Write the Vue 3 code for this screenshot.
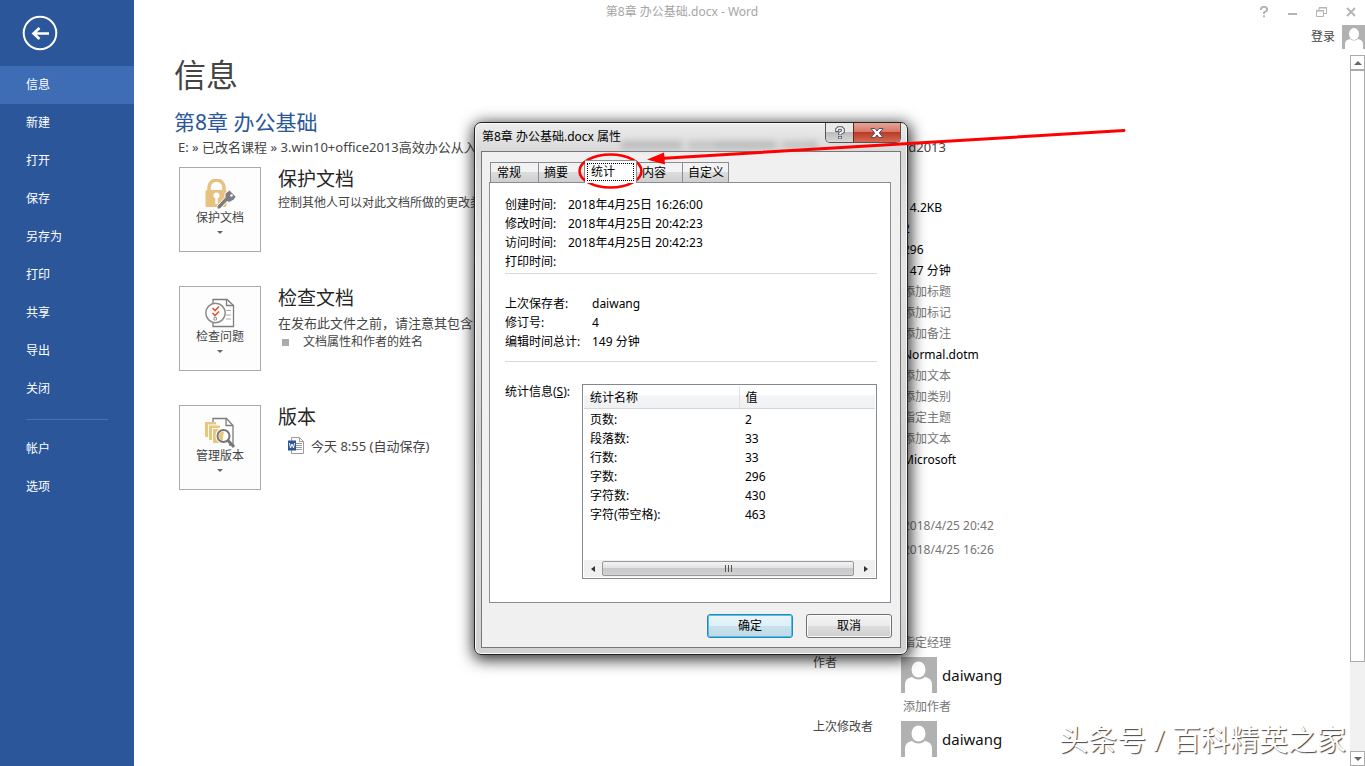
<template>
  <div class="word-app">
    <nav class="side-nav">
      <button class="back-btn" aria-label="返回">
        <svg width="36" height="36" viewBox="0 0 36 36" fill="none" stroke="#fff">
          <circle cx="18" cy="18" r="16.3" stroke-width="2" />
          <path d="M27 18.500H11M17.500 13l-6 5.500 6 5.500" stroke-width="2.6" />
        </svg>
      </button>
      <a
        v-for="item in navItems"
        :key="item"
        href="#"
        class="nav-item"
        :class="{ active: item === activeNav }"
        @click.prevent="activeNav = item"
      >{{ item }}</a>
      <div class="nav-line"></div>
      <a
        v-for="item in navBottom"
        :key="item"
        href="#"
        class="nav-item"
        :class="{ active: item === activeNav }"
        @click.prevent="activeNav = item"
      >{{ item }}</a>
    </nav>

    <div class="main">
      <header class="title-bar">
        <span class="title-text">第8章 办公基础.docx - Word</span>
        <div class="window-tools">
          <button aria-label="帮助">
            <svg width="12" height="12" viewBox="0 0 12 12" fill="none" stroke="#b5b5b5" stroke-width="2">
              <path d="M3 4V2.500L4.500 1h3L9 2.500v2L6 6.500V8M6 9.300v2" />
            </svg>
          </button>
          <button aria-label="最小化">
            <svg width="12" height="12" viewBox="0 0 12 12" stroke="#b5b5b5" stroke-width="2">
              <path d="M1 8h9" />
            </svg>
          </button>
          <button aria-label="还原">
            <svg width="12" height="12" viewBox="0 0 12 12" fill="none" stroke="#b5b5b5">
              <path d="M3 4V1.500h7.500v6H8M3 2h8M0 5h8" />
              <path d="M.5 4.500h7v6h-7z" />
            </svg>
          </button>
          <button aria-label="关闭">
            <svg width="12" height="12" viewBox="0 0 12 12" stroke="#b5b5b5" stroke-width="2">
              <path d="M2 2l8 8M10 2l-8 8" />
            </svg>
          </button>
        </div>
      </header>
      <div class="account">
        <a href="#" class="login">登录</a>
        <svg class="account-avatar" width="23" height="24" viewBox="0 0 23 24">
          <path d="M0 0h23v24H0z" fill="#b1b1b1" />
          <ellipse cx="12" cy="9" rx="5" ry="6" fill="#fff" />
          <path d="M3 24v-5q0-4 5-5 4 3 8 0 5 1 5 5v5z" fill="#fff" />
        </svg>
      </div>

      <div class="body">
        <div class="content">
          <h1>信息</h1>
          <h2>第8章 办公基础</h2>
          <div class="path">
            <span>E: » 已改名课程 » 3.win10+office2013高效办公从入</span>
            <span>word2013</span>
          </div>
          <div class="columns">
            <div class="sections">
              <section class="section">
                <button class="card">
                  <svg width="32" height="32" viewBox="0 0 32 32">
                    <path d="M5 12V8.500a7.500 7.500 0 0 1 15 0V12" fill="none" stroke="#e8c181" stroke-width="3.500" />
                    <rect x="1.500" y="11" width="21" height="17" rx="1.500" fill="#e8c181" />
                    <circle cx="12.500" cy="16.500" r="3" fill="#fff" />
                    <path d="M11.300 18h2.500v7h-2.500z" fill="#fff" />
                    <path d="M21 14.500l4.500-3.500 6.500 6.500-2 3.500-5 2.500-2-1-7 7.500h-3v-3l8-8.500z" fill="#7d7d7d" stroke="#fff" />
                    <circle cx="27.500" cy="16.500" r="1.300" fill="#fff" />
                  </svg>
                  <span class="card-text">保护文档</span>
                  <span class="card-arrow"></span>
                </button>
                <div class="section-info">
                  <h3>保护文档</h3>
                  <p class="small">控制其他人可以对此文档所做的更改类</p>
                </div>
              </section>

              <section class="section">
                <button class="card">
                  <svg width="32" height="32" viewBox="0 0 32 32" fill="none" stroke="#7d7d7d">
                    <path d="M9 1.500h14l6.500 6v21H9z" fill="#fff" stroke-width="1.300" />
                    <path d="M22.500 1.500v6h7" stroke-width="1.300" />
                    <path d="M22 12.500h5M22 17h5M22 21h5" stroke="#aaa" />
                    <circle cx="11.500" cy="15" r="9.700" fill="#fff" stroke="#8c8c8c" stroke-width="1.500" />
                    <path d="M8.500 10l2.500 2.500 4-4M8.500 15l2.500 2.500 4-4" stroke="#d9553a" stroke-width="1.600" />
                    <path d="M10 19.500h2.500V22H10z" stroke="#999" />
                  </svg>
                  <span class="card-text">检查问题</span>
                  <span class="card-arrow"></span>
                </button>
                <div class="section-info">
                  <h3>检查文档</h3>
                  <p>在发布此文件之前，请注意其包含</p>
                  <ul>
                    <li>文档属性和作者的姓名</li>
                  </ul>
                </div>
              </section>

              <section class="section">
                <button class="card">
                  <svg width="32" height="32" viewBox="0 0 32 32" fill="none">
                    <path d="M9 5V1.500h13.500l6.500 7V28h-4" stroke="#7d7d7d" stroke-width="1.300" />
                    <path d="M22 1.500v7h7" stroke="#7d7d7d" stroke-width="1.300" />
                    <path d="M1 5h11v2.500H4V20H1z" fill="#e8c67c" />
                    <path d="M5 8.500h11V11H8v12H5z" fill="#e8c67c" />
                    <path d="M9 12h11v14H9z" fill="#e8c67c" />
                    <circle cx="19.500" cy="19" r="6" fill="#fcf5e5" stroke="#fff" stroke-width="4" />
                    <circle cx="19.500" cy="19" r="6" fill="#fff" stroke="#767676" stroke-width="2" />
                    <path d="M20 14.500q-5 0-5 4.500 0 4 4 4.500V20z" fill="#e8c67c" />
                    <path d="M24 23.500l6 6.500" stroke="#767676" stroke-width="3" />
                  </svg>
                  <span class="card-text">管理版本</span>
                  <span class="card-arrow"></span>
                </button>
                <div class="section-info">
                  <h3>版本</h3>
                  <a href="#" class="version">
                    <svg width="17" height="17" viewBox="0 0 17 17" fill="none">
                      <path d="M3.500.5h8l4 4v12h-12z" fill="#fff" stroke="#9b9b9b" />
                      <path d="M11.500.5v4h4M8 6.500h6M8 8.500h6M8 10.500h6M8 12.500h6" stroke="#9b9b9b" />
                      <path d="M0 3.500h8v10H0z" fill="#2b579a" />
                      <path d="M1.500 6l1 5L4 7l1.500 4 1-5" stroke="#fff" />
                    </svg>
                    <span>今天 8:55 (自动保存)</span>
                  </a>
                </div>
              </section>
            </div>

            <aside class="props">
              <div class="prop-group">
                <div v-for="(p, i) in props" :key="i" class="prop" :class="{ hint: p.hint }">{{ p.text }}</div>
              </div>
              <div class="prop-group dates">
                <div v-for="d in dates" :key="d" class="prop">{{ d }}</div>
              </div>
              <div class="prop hint manager">指定经理</div>
              <div v-for="person in people" :key="person.label" class="person-row">
                <span class="person-label">{{ person.label }}</span>
                <div class="person-main">
                  <div class="person">
                    <svg width="36" height="36" viewBox="0 0 36 36">
                      <path d="M0 0h36v36H0z" fill="#b1b1b1" />
                      <ellipse cx="17.500" cy="12.500" rx="7" ry="8" fill="#fff" />
                      <path d="M4 36v-8q0-7 7-8 6.500 5 13 0 7 1 7 8v8z" fill="#fff" />
                    </svg>
                    <span>{{ person.name }}</span>
                  </div>
                  <a v-if="person.add" href="#" class="add-link">{{ person.add }}</a>
                </div>
              </div>
            </aside>
          </div>
        </div>

        <div class="page-scroll">
          <button class="scroll-btn" aria-label="向上滚动"><span class="tri up"></span></button>
          <div class="scroll-thumb"></div>
          <div class="scroll-rest"></div>
          <button class="scroll-btn" aria-label="向下滚动"><span class="tri down"></span></button>
        </div>
      </div>
    </div>

    <div class="dialog" role="dialog" aria-labelledby="dialog-title">
      <div class="dialog-head">
        <span id="dialog-title" class="dialog-title">第8章 办公基础.docx 属性</span>
        <span class="glass-smudge"></span>
        <div class="dialog-tools">
          <button class="help-btn" aria-label="帮助">
            <svg width="12" height="14" viewBox="0 0 12 14" fill="none">
              <path d="M3 6V3.500L4.500 2h3L9 3.500v2L6 7.500V9M6 10v3" stroke="#4c5464" stroke-width="3.600" />
              <path d="M3 5V3.500L4.500 2h3L9 3.500v2L6 7.500v1M6 10.700v1.800" stroke="#fff" stroke-width="1.700" />
            </svg>
          </button>
          <button class="close-btn" aria-label="关闭">
            <svg width="14" height="12" viewBox="0 0 14 12">
              <path d="M1 1.500h4L7 4l2-2.500h4L9.300 6l3.700 4.500H9L7 8l-2 2.500H1L4.700 6z" fill="#fff" stroke="#54505f" />
            </svg>
          </button>
        </div>
      </div>
      <div class="dialog-body">
        <div class="tabs" role="tablist">
          <button
            v-for="tab in tabs"
            :key="tab"
            class="tab"
            :class="{ selected: tab === activeTab }"
            role="tab"
            :aria-selected="tab === activeTab"
            @click="activeTab = tab"
          ><span>{{ tab }}</span></button>
        </div>
        <div class="tab-page">
          <dl class="times">
            <template v-for="row in times" :key="row[0]">
              <dt>{{ row[0] }}</dt>
              <dd>{{ row[1] }}</dd>
            </template>
          </dl>
          <dl class="saves">
            <template v-for="row in saves" :key="row[0]">
              <dt>{{ row[0] }}</dt>
              <dd>{{ row[1] }}</dd>
            </template>
          </dl>
          <div class="stats">
            <span id="stats-label" class="stats-label">统计信息(<u>S</u>):</span>
            <div class="stats-box">
              <table aria-labelledby="stats-label">
                <thead>
                  <tr><th class="col-name">统计名称</th><th>值</th></tr>
                </thead>
                <tbody>
                  <tr v-for="s in stats" :key="s[0]">
                    <td>{{ s[0] }}</td>
                    <td>{{ s[1] }}</td>
                  </tr>
                </tbody>
              </table>
              <div class="h-scroll">
                <button aria-label="向左滚动"><span class="tri left"></span></button>
                <div class="h-thumb"><i></i><i></i><i></i></div>
                <button aria-label="向右滚动"><span class="tri right"></span></button>
              </div>
            </div>
          </div>
        </div>
        <div class="dialog-foot">
          <button class="dlg-btn primary">确定</button>
          <button class="dlg-btn">取消</button>
        </div>
      </div>
    </div>

    <!-- 红色标注 -->
    <svg class="mark" width="560" height="80" viewBox="0 0 560 80">
      <ellipse cx="40.500" cy="51" rx="31" ry="16.500" fill="none" stroke="#f00" stroke-width="2.600" />
      <path d="M554 10.500L90 38.500" stroke="#f00" stroke-width="3" stroke-linecap="round" />
      <path d="M77 39.500l17-7 1 12z" fill="#f00" />
    </svg>

    <div class="watermark">头条号 / 百科精英之家</div>
  </div>
</template>

<script setup>
import { ref } from 'vue'

const navItems = ['信息', '新建', '打开', '保存', '另存为', '打印', '共享', '导出', '关闭']
const navBottom = ['帐户', '选项']
const activeNav = ref('信息')

const props = [
  { text: '14.2KB' },
  { text: '2' },
  { text: '296' },
  { text: '147 分钟' },
  { text: '添加标题', hint: true },
  { text: '添加标记', hint: true },
  { text: '添加备注', hint: true },
  { text: 'Normal.dotm' },
  { text: '添加文本', hint: true },
  { text: '添加类别', hint: true },
  { text: '指定主题', hint: true },
  { text: '添加文本', hint: true },
  { text: 'Microsoft' },
]
const dates = ['2018/4/25 20:42', '2018/4/25 16:26']
const people = [
  { label: '作者', name: 'daiwang', add: '添加作者' },
  { label: '上次修改者', name: 'daiwang' },
]

const tabs = ['常规', '摘要', '统计', '内容', '自定义']
const activeTab = ref('统计')

const times = [
  ['创建时间:', '2018年4月25日 16:26:00'],
  ['修改时间:', '2018年4月25日 20:42:23'],
  ['访问时间:', '2018年4月25日 20:42:23'],
  ['打印时间:', ''],
]
const saves = [
  ['上次保存者:', 'daiwang'],
  ['修订号:', '4'],
  ['编辑时间总计:', '149 分钟'],
]
const stats = [
  ['页数:', '2'],
  ['段落数:', '33'],
  ['行数:', '33'],
  ['字数:', '296'],
  ['字符数:', '430'],
  ['字符(带空格):', '463'],
]
</script>

<style>
body {
  margin: 0;
  background: #fff;
}
</style>

<style scoped>
.word-app {
  position: relative;
  display: flex;
  height: 100vh;
  overflow: hidden;
  font-family: "Noto Sans", "Noto Sans CJK SC", sans-serif;
  font-size: 12px;
  line-height: 16px;
  color: #444;
}

.word-app * {
  box-sizing: border-box;
}

button {
  font: inherit;
  color: inherit;
  padding: 0;
  border: none;
  background: none;
  cursor: pointer;
}

a {
  color: inherit;
  text-decoration: none;
}

h1, h2, h3, p, ul, dl, dd {
  margin: 0;
  padding: 0;
  font-weight: normal;
}

svg {
  display: block;
  flex: none;
}

/* 左侧导航 */
.side-nav {
  flex: none;
  width: 134px;
  background: #2b579a;
  color: #fff;
}

.back-btn {
  display: block;
  margin: 15px 0 15px 22px;
}

.nav-item {
  display: block;
  padding-left: 26px;
  line-height: 38px;
  height: 38px;
}

.nav-item.active {
  background: #3e6db5;
}

.nav-line {
  height: 1px;
  margin: 11px 26px 10px;
  background: #4a71ab;
}

/* 主区域 */
.main {
  flex: 1;
  min-width: 0;
  display: flex;
  flex-direction: column;
}

.title-bar {
  display: flex;
  align-items: center;
  height: 24px;
  color: #a6a6a6;
}

.title-text {
  flex: 1;
  text-align: center;
}

.window-tools {
  width: 135px;
  display: flex;
  justify-content: flex-end;
  gap: 17px;
  padding-right: 8px;
}

.account {
  display: flex;
  justify-content: flex-end;
  align-items: center;
  gap: 7px;
  height: 26px;
  margin-bottom: 5px;
}

.body {
  flex: 1;
  min-height: 0;
  display: flex;
}

.content {
  flex: 1;
  min-width: 0;
  padding-left: 40px;
}

h1 {
  font-size: 32px;
  line-height: 40px;
}

h2 {
  margin-top: 13px;
  font-size: 21px;
  line-height: 28px;
  color: #2b579a;
}

.path {
  display: flex;
  justify-content: space-between;
  width: 772px;
  padding-left: 4px;
  margin-top: 2px;
  font-size: 13px;
  line-height: 18px;
}

.columns {
  display: flex;
  padding-top: 11px;
}

.sections {
  width: 639px;
  padding-left: 5px;
  display: flex;
  flex-direction: column;
  gap: 34px;
}

.section {
  display: flex;
  gap: 17px;
}

.card {
  flex: none;
  width: 82px;
  height: 85px;
  display: flex;
  flex-direction: column;
  align-items: center;
  padding-top: 11px;
  background: #fdfdfd;
  border: 1px solid #ababab;
}

.card-text {
  line-height: 16px;
  margin-top: -1px;
}

.card-arrow {
  margin-top: 5px;
  border: 3px solid transparent;
  border-top-color: #666;
  border-bottom: none;
}

h3 {
  font-size: 19px;
  line-height: 24px;
  color: #262626;
}

.section-info p {
  margin-top: 4px;
  font-size: 13px;
  line-height: 18px;
}

.section-info .small {
  margin-top: 3px;
  font-size: 12px;
}

.section-info li {
  display: flex;
  align-items: center;
  line-height: 20px;
}

.section-info li::before {
  content: "";
  width: 7px;
  height: 7px;
  margin: 0 14px 0 4px;
  background: #ababab;
}

.version {
  display: flex;
  align-items: center;
  gap: 6px;
  margin: 8px 0 0 10px;
  font-size: 13px;
}

/* 文档属性 */
.props {
  padding-top: 30px;
}

.prop {
  padding-left: 90px;
  line-height: 21px;
  color: #000;
}

.prop.hint {
  color: #767676;
}

.dates {
  margin: 44px 0 70px;
}

.dates .prop {
  line-height: 24px;
  color: #767676;
}

.manager {
  margin-bottom: 4px;
}

.person-row {
  display: flex;
}

.person-label {
  width: 88px;
  line-height: 12px;
}

.person {
  display: flex;
  align-items: center;
  gap: 5px;
  font-size: 15px;
  color: #111;
}

.add-link {
  display: block;
  padding-left: 2px;
  line-height: 28px;
  color: #767676;
}

/* 页面滚动条 */
.page-scroll {
  width: 15px;
  display: flex;
  flex-direction: column;
  background: #f1f1f1;
}

.scroll-btn {
  width: 15px;
  height: 15px;
  display: flex;
  align-items: center;
  justify-content: center;
  background: #fff;
  border: 1px solid #ababab;
}

.scroll-thumb {
  flex: 591;
  background: #fff;
  border: 1px solid #ababab;
}

.scroll-rest {
  flex: 89;
}

.tri {
  width: 0;
  height: 0;
  border: 4px solid transparent;
}

.tri.up {
  border-bottom-color: #666;
  border-top: none;
}

.tri.down {
  border-top-color: #666;
  border-bottom: none;
}

.tri.left {
  border-width: 3px;
  border-right: 4px solid #333;
  border-left: none;
}

.tri.right {
  border-width: 3px;
  border-left: 4px solid #333;
  border-right: none;
}

/* 属性对话框 */
.dialog {
  position: absolute;
  left: 474px;
  top: 122px;
  width: 434px;
  padding: 0 6px 6px;
  color: #000;
  background: linear-gradient(#ececec, #d8d8d8 30px, #e6e6e6 150px, #cfcfcf 60%, #d8d8d8 80%, #d2d2d2);
  border: 1px solid #222;
  border-radius: 7px;
  box-shadow: inset 0 0 0 1px #fafafa, 1px 3px 15px 2px rgba(0, 0, 0, 0.8);
}

.dialog-head {
  display: flex;
  height: 28px;
}

.dialog-title {
  padding-left: 1px;
  line-height: 28px;
}

.glass-smudge {
  flex: 1;
  height: 8px;
  margin: 18px 8px 0 0;
  background: repeating-linear-gradient(90deg, #999 0 60px, #ddd 62px 66px, #aaa 68px 94px);
  filter: blur(3px);
  opacity: 0.5;
}

.dialog-tools {
  display: flex;
  height: 20px;
  border: 1px solid #555;
  border-top: none;
  border-radius: 0 0 5px 5px;
  overflow: hidden;
}

.dialog-tools button {
  display: flex;
  align-items: center;
  justify-content: center;
}

.help-btn {
  width: 27px;
  background: linear-gradient(#e9e9e9 45%, #bcbcbc 50%, #d8d8d8);
}

.dialog-tools .close-btn {
  width: 47px;
  border-left: 1px solid #5c2a22;
  background: linear-gradient(#e5a497, #d6796a 45%, #b93c28 50%, #d4694f);
}

.dialog-body {
  padding: 8px 9px 9px 7px;
  background: #f0f0f0;
  border: 1px solid #777;
}

.tabs {
  display: flex;
  align-items: flex-end;
  height: 22px;
  padding-left: 1px;
}

.tab {
  height: 20px;
  min-width: 46px;
  padding: 0 4px;
  text-align: left;
  background: linear-gradient(#f2f2f2 45%, #dcdcdc 50%, #cfcfcf);
  border: 1px solid #898c95;
  border-bottom: none;
}

.tab:first-child {
  min-width: 49px;
  padding-left: 6px;
}

.tab + .tab {
  border-left: none;
  padding-left: 5px;
}

.tab.selected {
  position: relative;
  z-index: 1;
  height: 23px;
  margin-bottom: -1px;
  width: 52px;
  background: #fff;
}

.tab + .tab.selected {
  padding: 2px;
}

.tab.selected span {
  display: block;
  height: 18px;
  padding-left: 3px;
  border: 1px dotted #000;
}

.tab-page {
  padding: 12px 13px 23px 15px;
  background: #fff;
  border: 1px solid #898c95;
}

dl {
  display: grid;
  line-height: 19px;
  grid-auto-rows: 19px;
  border-bottom: 1px solid #d5dadf;
}

.times {
  grid-template-columns: 63px 1fr;
  padding-bottom: 2px;
}

.saves {
  grid-template-columns: 87px 1fr;
  padding: 20px 0 10px;
}

.stats {
  display: flex;
  margin-top: 22px;
}

.stats-label {
  width: 77px;
}

.stats-box {
  flex: 1;
  height: 195px;
  display: flex;
  flex-direction: column;
  justify-content: space-between;
  padding: 1px;
  border: 1px solid #828790;
}

table {
  width: 100%;
  border-collapse: collapse;
}

th {
  height: 22px;
  padding: 2px 6px 0;
  font-weight: normal;
  text-align: left;
  background: linear-gradient(#fff 40%, #f2f4f6 45%, #f0f1f3);
  border-bottom: 1px solid #d5d5d5;
}

.col-name {
  width: 155px;
  border-right: 1px solid #dfe1e3;
}

td {
  height: 19px;
  padding: 0 6px;
  line-height: 19px;
}

tbody::before {
  content: "";
  display: block;
  height: 1px;
}

.h-scroll {
  display: flex;
  height: 17px;
  background: #f0f0f0;
}

.h-scroll button {
  width: 18px;
  display: flex;
  align-items: center;
  justify-content: center;
}

.h-thumb {
  flex: 1;
  display: flex;
  align-items: center;
  justify-content: center;
  gap: 2px;
  height: 15px;
  margin: 1px 3px 0 0;
  background: linear-gradient(#f3f3f3, #e2e2e2 45%, #c8c8cb 50%, #d3d3d5);
  border: 1px solid #979797;
  border-radius: 2px;
}

.h-thumb i {
  width: 1px;
  height: 7px;
  background: #555;
}

.dialog-foot {
  display: flex;
  justify-content: flex-end;
  gap: 13px;
  padding-top: 11px;
  margin-right: -1px;
}

.dlg-btn {
  width: 86px;
  height: 24px;
  background: linear-gradient(#f3f3f3, #ebebeb 48%, #dddddd 50%, #cfcfcf);
  border: 1px solid #707070;
  border-radius: 3px;
  box-shadow: inset 0 0 0 1px #fafafa;
}

.dlg-btn.primary {
  background: linear-gradient(#eaf4f9, #def0f8 48%, #c9e1ed 50%, #bfd9e6);
  border-color: #3c7fb1;
  box-shadow: inset 0 0 0 1px #3bc9f3;
}

.mark {
  position: absolute;
  left: 570px;
  top: 120px;
  pointer-events: none;
}

.watermark {
  position: absolute;
  right: 19px;
  bottom: 8px;
  font-size: 29px;
  line-height: 36px;
  color: #fff;
  text-shadow: 1px 1px 1px #444;
  pointer-events: none;
}
</style>
